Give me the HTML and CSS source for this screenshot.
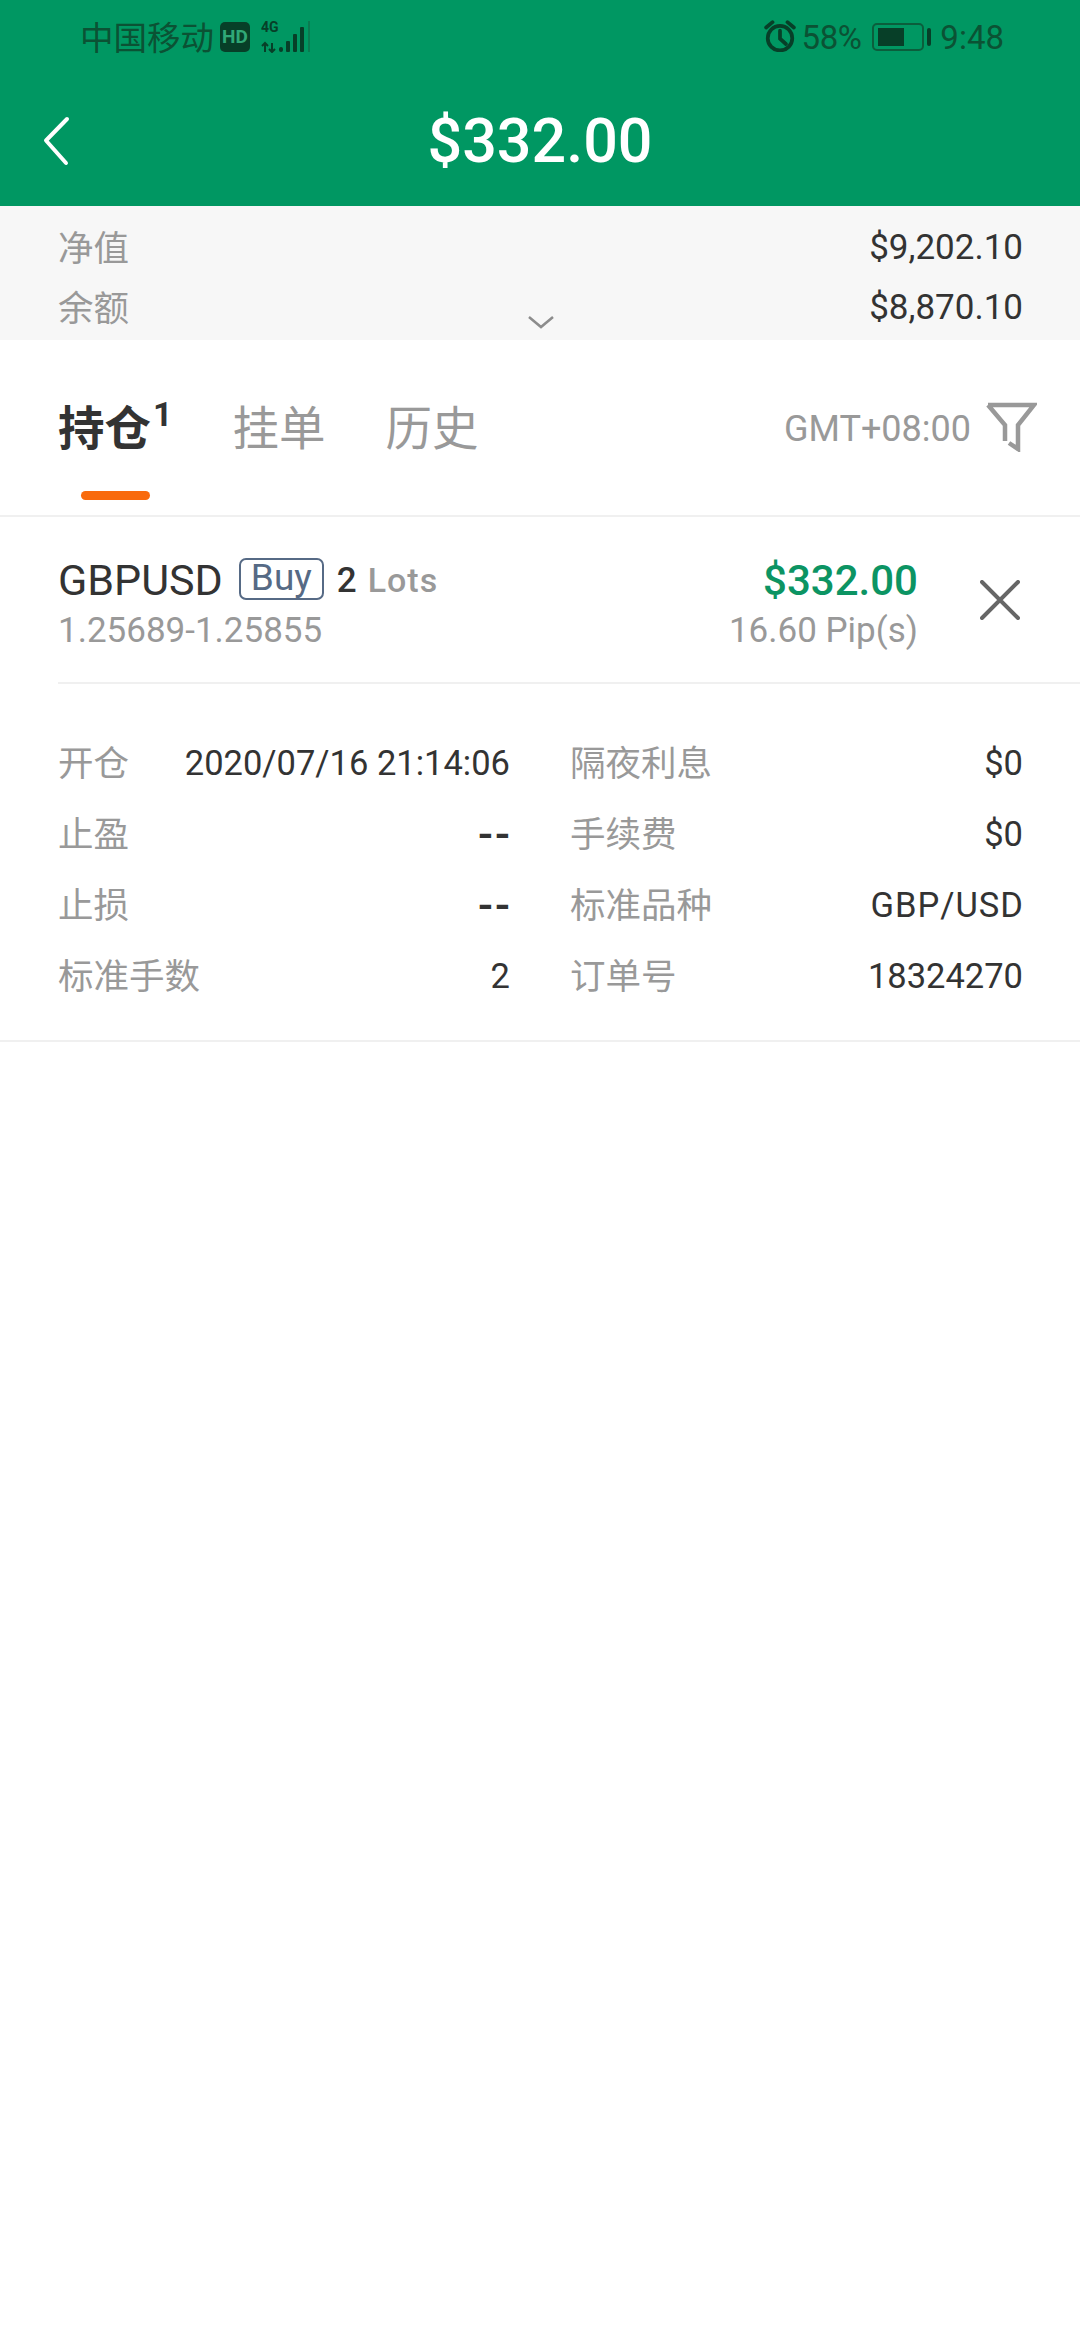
FILE: index.html
```html
<!DOCTYPE html>
<html lang="zh">
<head>
<meta charset="utf-8">
<title>$332.00</title>
<link rel="stylesheet" href="styles.css">
</head>
<body>
<header class="top">
  <div class="status">
    <div class="status-left">
      <span class="carrier">中国移动</span>
      <span class="hd">HD</span>
      <svg class="signal" width="50" height="33" viewBox="0 0 50 33">
        <text class="signal-text" x="0" y="12">4G</text>
        <path class="signal-arrows" d="M4 23v9M1 26l3-3 3 3M11 23v9M8 29l3 3 3-3"/>
        <rect class="bar" x="18" y="27" width="4" height="5" rx="2"/>
        <rect class="bar" x="25" y="21" width="4" height="11" rx="1"/>
        <rect class="bar" x="32" y="14" width="4" height="18" rx="1"/>
        <rect class="bar" x="39" y="7" width="4" height="25" rx="1"/>
        <rect class="bar-faint" x="47" y="1" width="2" height="31"/>
      </svg>
    </div>
    <div class="status-right">
      <svg class="alarm" width="32" height="32" viewBox="0 0 30 30">
        <circle cx="15" cy="17" r="11.5"/>
        <path d="M15 10v7.5l5.500 5M2 7l6-5M28 7l-6-5"/>
      </svg>
      <span class="pct">58%</span>
      <span class="battery"><span class="battery-fill"></span></span>
      <span class="nub"></span>
      <span class="clock">9:48</span>
    </div>
  </div>
  <div class="toolbar">
    <svg class="back" width="28" height="50" viewBox="0 0 28 50">
      <path d="M25 3L4 24.500 24 47"/>
    </svg>
    <h1 class="title">$332.00</h1>
  </div>
</header>

<section class="summary">
  <div class="summary-row"><span class="muted">净值</span><span class="summary-value">$9,202.10</span></div>
  <div class="summary-row"><span class="muted">余额</span><span class="summary-value">$8,870.10</span></div>
  <svg class="chevron" width="28" height="14" viewBox="0 0 28 14">
    <path d="M2 2l12 10L26 2"/>
  </svg>
</section>

<nav class="tabs">
  <div class="tab tab-active">
    <span class="tab-label">持仓<sup class="tab-count">1</sup></span>
    <span class="tab-mark"></span>
  </div>
  <div class="tab"><span class="tab-label">挂单</span></div>
  <div class="tab"><span class="tab-label">历史</span></div>
  <div class="tools">
    <span class="zone">GMT+08:00</span>
    <svg class="filter" width="52" height="50" viewBox="0 0 52 50">
      <path d="M3 3H49L33 23V47L24 41M3 3L20 23V39"/>
    </svg>
  </div>
</nav>

<section class="order">
  <div class="order-main">
    <div class="order-left">
      <div class="line">
        <span class="symbol">GBPUSD</span>
        <span class="side">Buy</span>
        <span class="lots-num">2</span>
        <span class="lots-unit">Lots</span>
      </div>
      <div class="line prices">1.25689-1.25855</div>
    </div>
    <div class="order-right">
      <div class="line profit">$332.00</div>
      <div class="line pips">16.60 Pip(s)</div>
    </div>
    <svg class="close" width="40" height="40" viewBox="0 0 40 40">
      <path d="M2 2L38 38M38 2L2 38"/>
    </svg>
  </div>
  <div class="details">
    <div class="cell"><span class="muted">开仓</span><span class="val">2020/07/16 21:14:06</span></div>
    <div class="cell"><span class="muted">隔夜利息</span><span class="val">$0</span></div>
    <div class="cell"><span class="muted">止盈</span><span class="val val-dash">--</span></div>
    <div class="cell"><span class="muted">手续费</span><span class="val">$0</span></div>
    <div class="cell"><span class="muted">止损</span><span class="val val-dash">--</span></div>
    <div class="cell"><span class="muted">标准品种</span><span class="val val-wide">GBP/USD</span></div>
    <div class="cell"><span class="muted">标准手数</span><span class="val">2</span></div>
    <div class="cell"><span class="muted">订单号</span><span class="val">18324270</span></div>
  </div>
</section>
</body>
</html>
```

FILE: styles.css
```css
* { box-sizing: border-box; }
html, body { margin: 0; padding: 0; background: #fff; }
body {
  width: 1080px;
  min-height: 2340px;
  font-family: Roboto, "Noto Sans CJK SC", sans-serif;
  color: #333;
}

.top { background: #009762; height: 206px; }
.status {
  height: 74px;
  display: flex;
  justify-content: space-between;
  align-items: center;
  padding: 0 76px 0 80px;
  color: #0b5234;
}
.status-left, .status-right { display: flex; align-items: center; }
.carrier { font-size: 33.500px; margin-bottom: 3px; }
.hd {
  width: 30px; height: 30px; margin-left: 6px;
  background: #073f28; color: #30a877; border-radius: 5px;
  font-size: 19px; font-weight: 700; line-height: 30px; text-align: center;
}
.signal { margin-left: 11px; margin-top: -2px; }
.signal-text { font-size: 14px; font-weight: 700; fill: #073f28; }
.signal-arrows { fill: none; stroke: #073f28; stroke-width: 2; }
.bar { fill: #073f28; }
.bar-faint { fill: #0b7a50; }
.alarm { margin-right: 6px; margin-top: -2px; }
.alarm circle, .alarm path { fill: none; stroke: #073f28; stroke-width: 3.500; stroke-linecap: round; }
.pct { font-size: 33px; letter-spacing: -0.5px; }
.battery {
  width: 52px; height: 28px; margin-left: 11px; padding: 3px 4px;
  border: 2px solid #0b5e3c; border-radius: 5px; display: flex;
}
.battery-fill { width: 26px; background: #073f28; }
.nub { width: 4px; height: 18px; margin-left: 3px; background: #073f28; border-radius: 2px; }
.clock { font-size: 33px; margin-left: 9px; }

.toolbar { position: relative; height: 132px; display: flex; align-items: center; justify-content: center; }
.back { position: absolute; left: 42px; top: 42px; }
.back path { fill: none; stroke: #fff; stroke-width: 4; stroke-linecap: round; stroke-linejoin: round; }
.title { margin: 2px 0 0; font-size: 61px; font-weight: 500; color: #fff; line-height: 1; }

.summary { position: relative; height: 134px; background: #f7f7f7; padding: 11px 57px 0 58px; }
.summary-row { height: 60px; display: flex; justify-content: space-between; align-items: center; }
.summary-value { font-size: 35px; color: #333; }
.muted { font-size: 35.500px; color: #999; margin-bottom: 4px; }
.chevron { position: absolute; left: 527px; top: 109px; }
.chevron path { fill: none; stroke: #8c8c8c; stroke-width: 2.500; }

.tabs {
  display: flex; gap: 60px;
  padding: 60px 58px 0;
  height: 177px;
  border-bottom: 2px solid #f0f0f0;
}
.tab { display: flex; flex-direction: column; }
.tab-label { height: 58px; line-height: 58px; font-size: 46.500px; color: #999; white-space: nowrap; }
.tab-active .tab-label { color: #333; font-weight: 700; }
.tab-count { font-size: 34px; font-weight: 700; line-height: 0; vertical-align: 19px; margin-left: 2px; }
.tab-mark { align-self: center; width: 69px; height: 9px; margin-top: 33px; background: #f96a0c; border-radius: 5px; }
.tools { margin-left: auto; margin-right: -15px; height: 58px; display: flex; align-items: center; gap: 14px; }
.zone { font-size: 36px; color: #999; }
.filter { margin-top: -4px; }
.filter path { fill: none; stroke: #999; stroke-width: 4.500; stroke-linejoin: miter; }

.order { border-bottom: 2px solid #f0f0f0; }
.order-main {
  display: flex; align-items: center;
  margin-left: 58px; padding-right: 60px;
  border-bottom: 2px solid #f0f0f0;
}
.order-left { flex: 1; padding: 38px 0 27px; }
.order-right { text-align: right; margin-right: 62px; padding: 38px 0 27px; }
.line { height: 50px; display: flex; align-items: center; white-space: nowrap; }
.order-right .line { justify-content: flex-end; }
.symbol { font-size: 43px; color: #333; }
.side {
  margin-left: 16px; height: 42px; margin-top: -3px; padding: 0 10px;
  border: 2.500px solid #566a85; border-radius: 7px;
  color: #566a85; font-size: 37px; line-height: 36px;
}
.lots-num { margin-left: 13px; font-size: 35px; font-weight: 500; color: #333; }
.lots-unit { margin-left: 11px; font-size: 34px; font-weight: 500; color: #999; letter-spacing: 1px; }
.prices { font-size: 35px; color: #999; }
.profit { font-size: 42px; font-weight: 500; color: #0c9463; }
.pips { font-size: 35px; color: #999; }
.close path { fill: none; stroke: #666; stroke-width: 4; stroke-linecap: round; }

.details {
  display: grid;
  grid-template-columns: 452px 453px;
  column-gap: 60px;
  grid-auto-rows: 71px;
  padding: 43px 57px 29px 58px;
}
.cell { display: flex; justify-content: space-between; align-items: center; }
.val { font-size: 34.500px; color: #333; }
.val-dash { font-size: 44px; line-height: 1; font-weight: 500; letter-spacing: 2px; margin-right: -2px; }
.val-wide { letter-spacing: 1px; margin-right: -1px; }
```
